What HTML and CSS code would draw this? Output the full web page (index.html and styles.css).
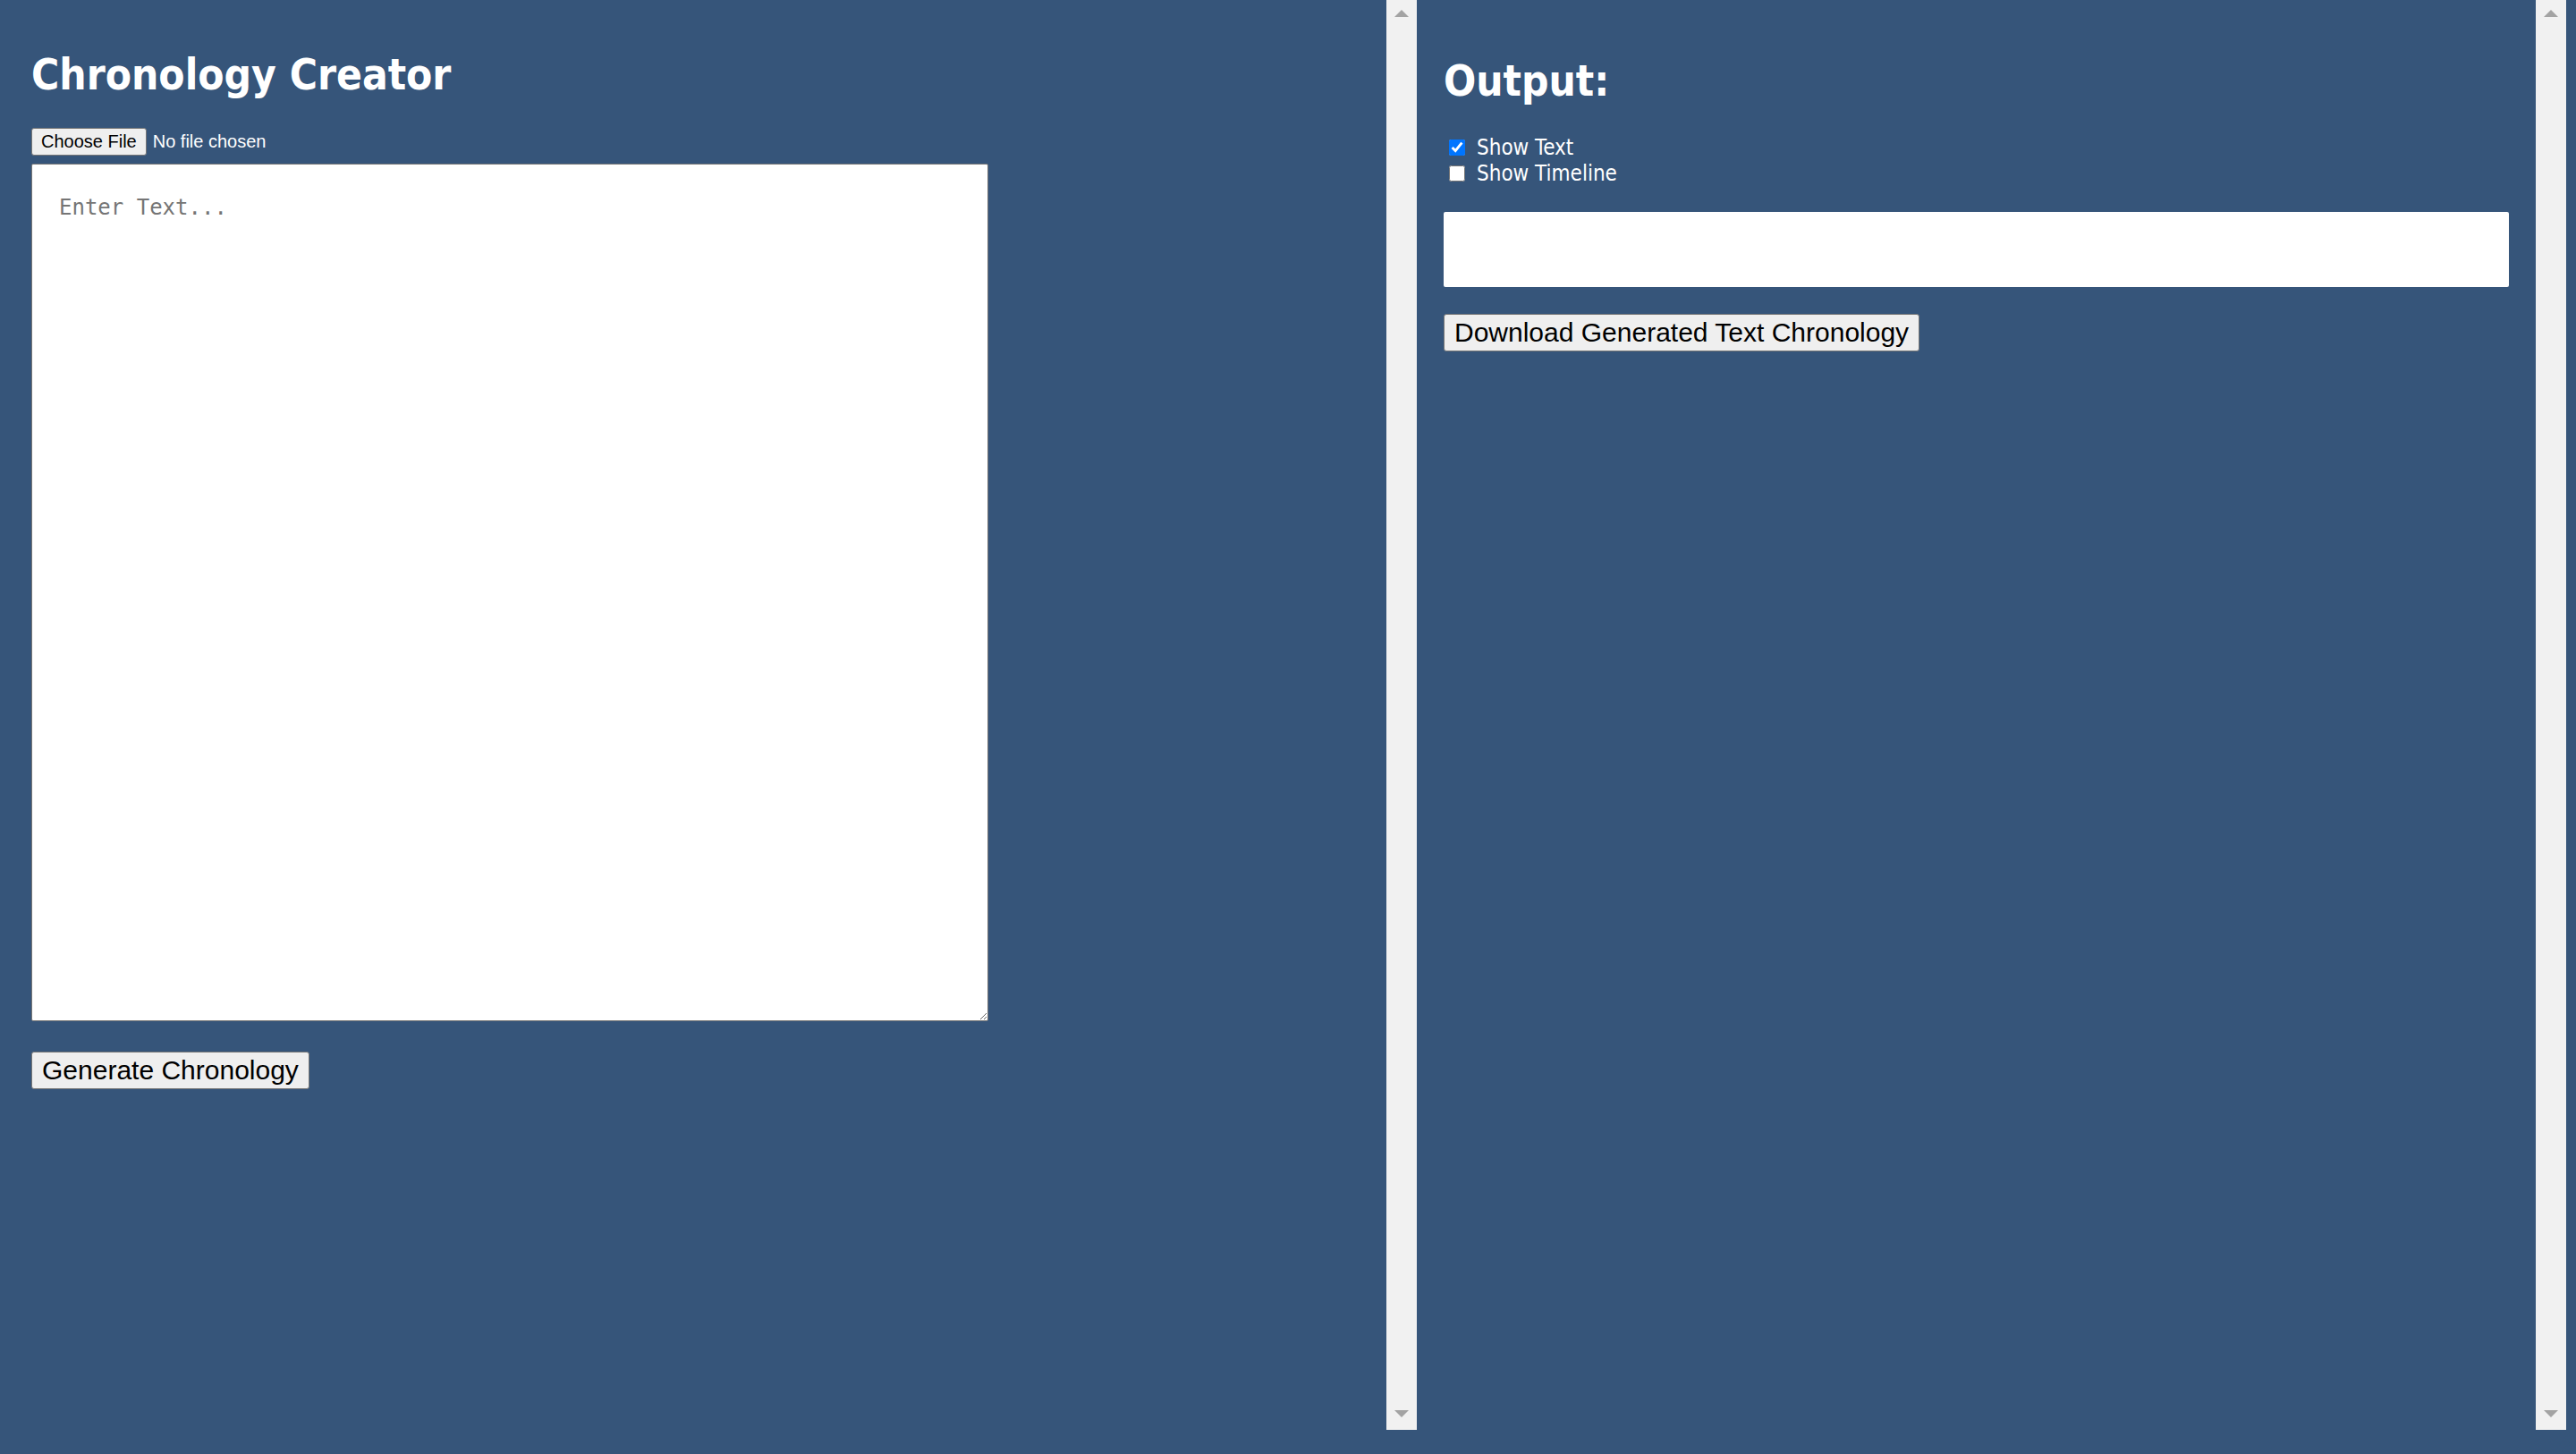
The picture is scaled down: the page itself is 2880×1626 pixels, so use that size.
FILE: index.html
```html
<!DOCTYPE html>
<html lang="en">
<head>
<meta charset="utf-8">
<title>Chronology Creator</title>
<link rel="stylesheet" href="styles.css">
</head>
<body>
<div class="app">
  <section class="panel panel-left">
    <div class="panel-body">
      <h1 class="title">Chronology Creator</h1>
      <input class="file-input" type="file">
      <textarea class="text-input" placeholder="Enter Text..."></textarea>
      <div class="actions">
        <button class="btn" type="button">Generate Chronology</button>
      </div>
    </div>
    <div class="scrollbar"><span class="arrow-up"></span><span class="arrow-down"></span></div>
  </section>
  <section class="panel panel-right">
    <div class="panel-body right-body">
      <h2 class="title title-output">Output:</h2>
      <div class="options">
        <label class="option"><input class="check" type="checkbox" checked><span>Show Text</span></label>
        <label class="option"><input class="check" type="checkbox"><span>Show Timeline</span></label>
      </div>
      <div class="output-box"></div>
      <div class="actions-right">
        <button class="btn" type="button">Download Generated Text Chronology</button>
      </div>
    </div>
    <div class="scrollbar"><span class="arrow-up"></span><span class="arrow-down"></span></div>
  </section>
</div>
</body>
</html>
```
FILE: styles.css
```css
html, body {
  margin: 0;
  padding: 0;
  background: #36557a;
}
body {
  height: 1626px;
  overflow: hidden;
  font-family: "Liberation Sans", Arial, sans-serif;
}
.app {
  display: flex;
  height: 1599px;
}
.panel {
  display: flex;
  height: 100%;
}
.panel-left { width: 1584px; }
.panel-right { width: 1285px; }
.panel-body {
  flex: 1;
  display: flex;
  flex-direction: column;
  align-items: flex-start;
  padding: 56px 0 0 35px;
}
.right-body {
  padding: 63px 30px 0 30px;
  align-items: stretch;
}
.title {
  margin: 0;
  color: #ffffff;
  font-family: "DejaVu Sans", Verdana, sans-serif;
  font-stretch: condensed;
  font-weight: bold;
  font-size: 47.4px;
  line-height: 55px;
  height: 55px;
}
.panel-left .title { margin-bottom: 32px; }
.file-input {
  color: #ffffff;
  font-family: "Liberation Sans", Arial, sans-serif;
  font-size: 20px;
  height: 31px;
  margin: 0 0 9px 0;
  padding: 0;
}
.file-input::file-selector-button {
  font-family: "Liberation Sans", Arial, sans-serif;
  font-size: 20px;
  line-height: 23px;
  height: 31px;
  color: #000000;
  background: #efefef;
  border: 1px solid #767676;
  border-radius: 3px;
  padding: 3px 10px;
  margin: 0 7px 0 0;
}
.text-input {
  box-sizing: border-box;
  width: 1070px;
  height: 959px;
  margin: 0;
  padding: 34px 30px;
  border: 1px solid #767676;
  border-radius: 2px;
  background: #ffffff;
  font-family: "DejaVu Sans Mono", "Liberation Mono", monospace;
  font-size: 24px;
  resize: both;
}
.text-input::placeholder { color: #757575; }
.actions { margin-top: 34px; }
.btn {
  font-family: "Liberation Sans", Arial, sans-serif;
  font-size: 30px;
  line-height: 34px;
  color: #000000;
  background: #efefef;
  border: 1px solid #767676;
  border-radius: 3px;
  padding: 3px 11px;
  margin: 0;
}
.options {
  margin-top: 32px;
  display: flex;
  flex-direction: column;
}
.option {
  display: flex;
  align-items: center;
  height: 29px;
  color: #ffffff;
  font-family: "DejaVu Sans", Tahoma, sans-serif;
  font-stretch: condensed;
  font-size: 24px;
}
.check {
  width: 18px;
  height: 18px;
  margin: 0 13px 0 6px;
}
.output-box {
  margin-top: 29px;
  height: 84px;
  background: #ffffff;
  border-radius: 2px;
}
.actions-right { margin-top: 30px; }
.scrollbar {
  width: 34px;
  background: #f1f1f1;
  display: flex;
  flex-direction: column;
  justify-content: space-between;
  align-items: center;
  padding: 11px 0 14px 0;
  box-sizing: border-box;
}
.arrow-up {
  width: 0;
  height: 0;
  border-left: 8px solid transparent;
  border-right: 8px solid transparent;
  border-bottom: 8px solid #a3a3a3;
}
.arrow-down {
  width: 0;
  height: 0;
  border-left: 8px solid transparent;
  border-right: 8px solid transparent;
  border-top: 8px solid #a3a3a3;
}
```
